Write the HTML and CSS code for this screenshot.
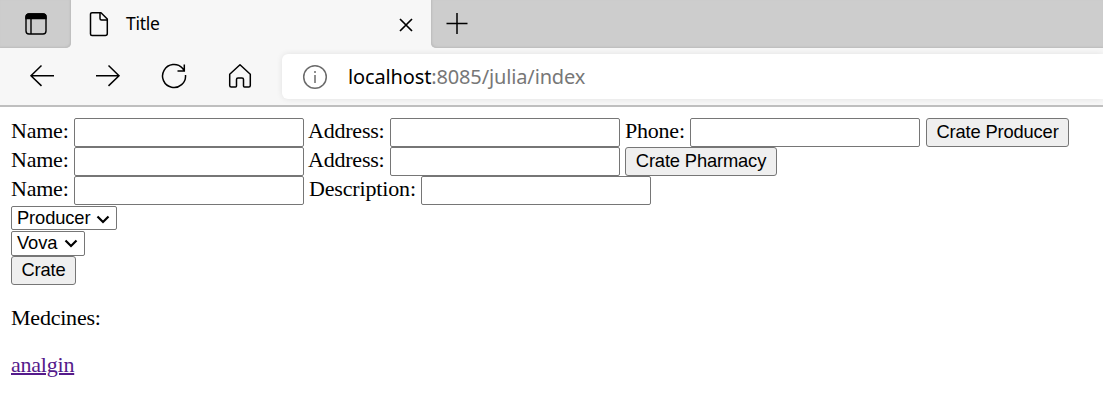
FILE: index.html
```html
<!DOCTYPE html>
<html lang="en">
<head>
<meta charset="utf-8">
<title>Title</title>
<link rel="stylesheet" href="styles.css">
</head>
<body>
<header class="browser">
  <div class="tabstrip">
    <div class="strip-left">
      <svg class="icon-workspace" width="22" height="22" viewBox="0 0 22 22" fill="none" stroke="#000" stroke-width="1.4"><rect x="1" y="1" width="20" height="20" rx="3"/><path d="M1 5.500V4a3 3 0 0 1 3-3h14a3 3 0 0 1 3 3v1.500z" fill="#000"/><path d="M6 5v16"/></svg>
    </div>
    <div class="tab">
      <svg class="icon-page" width="20" height="26" viewBox="0 0 20 26" fill="none" stroke="#000" stroke-width="1.500" stroke-linejoin="round"><path d="M3 1.700h9l6.300 6.300v14.500a2 2 0 0 1-2 2H3a1.500 1.500 0 0 1-1.500-1.500V3.200A1.500 1.500 0 0 1 3 1.700z"/><path d="M11 2v5.500a1.500 1.500 0 0 0 1.500 1.500h5.500"/></svg>
      <span class="tab-title">Title</span>
      <svg class="icon-close" width="14" height="14" viewBox="0 0 14 14" stroke="#000" stroke-width="1.700"><path d="M1 1l12 12M13 1L1 13"/></svg>
    </div>
    <div class="strip-right">
      <svg width="22" height="22" viewBox="0 0 22 22" stroke="#000" stroke-width="1.500"><path d="M.5 10.500h21M11 0v21"/></svg>
    </div>
  </div>
  <div class="toolbar">
    <nav class="nav">
      <svg width="26" height="26" viewBox="0 0 26 26"><path d="M25 12.700H2M12.500 2.500L2 12.700l10.500 10.200"/></svg>
      <svg width="26" height="26" viewBox="0 0 26 26"><path d="M1 12.700h23M13.500 2.500L24 12.700 13.500 22.900"/></svg>
      <svg width="26" height="26" viewBox="0 0 26 26"><path d="M24.500 12A11.500 11.500 0 1 1 21.500 5.200L23 7.300M23.300 1.500V8H16.500"/></svg>
      <svg width="26" height="26" viewBox="0 0 26 26" stroke-linejoin="round"><path d="M2.700 11.200L13 1.800l10.300 9.400V22.500a1.500 1.500 0 0 1-1.500 1.500h-4.300a1 1 0 0 1-1-1v-6.500a1.500 1.500 0 0 0-1.500-1.500h-4a1.500 1.500 0 0 0-1.500 1.500V23a1 1 0 0 1-1 1H4.200a1.500 1.500 0 0 1-1.500-1.500z"/></svg>
    </nav>
    <div class="address">
      <svg width="26" height="26" viewBox="0 0 26 26" fill="none" stroke="#6b6b6b" stroke-width="1.500"><circle cx="13" cy="13" r="11.300"/><path d="M13 11v8M13 7v2"/></svg>
      <span class="url"><span class="host">localhost</span>:8085/julia/index</span>
    </div>
  </div>
</header>
<main class="content">
  <form class="row">
    <label class="name">Name:</label><input type="text">
    <label class="addr">Address:</label><input type="text">
    <label class="phone">Phone:</label><input type="text">
    <button type="button" class="btn producer">Crate Producer</button>
  </form>
  <form class="row">
    <label class="name">Name:</label><input type="text">
    <label class="addr">Address:</label><input type="text">
    <button type="button" class="btn pharmacy">Crate Pharmacy</button>
  </form>
  <form>
    <div class="row">
      <label class="name">Name:</label><input type="text">
      <label class="desc">Description:</label><input type="text">
    </div>
    <div class="select select-producer"><span>Producer</span><svg width="14" height="9" viewBox="0 0 14 9"><path d="M1.500 1.500L7 7l5.500-5.500"/></svg></div>
    <div class="select select-vova"><span>Vova</span><svg width="14" height="9" viewBox="0 0 14 9"><path d="M1.500 1.500L7 7l5.500-5.500"/></svg></div>
    <button type="button" class="btn crate">Crate</button>
  </form>
  <p class="heading">Medcines:</p>
  <a class="link" href="#">analgin</a>
</main>
</body>
</html>
```
FILE: styles.css
```css
* { box-sizing: border-box; }
body { margin: 0; width: 1103px; height: 406px; overflow: hidden; background: #fff; color: #000; }
svg { display: block; flex: none; }

.browser { height: 107px; background: #f7f7f7; border-bottom: 2px solid #bfbfbf; }
.tabstrip { display: flex; height: 48px; }
.strip-left { width: 71px; background: #cdcdcd; border-radius: 0 0 5px 0; padding: 13px 0 0 25px; box-shadow: inset -1px -1px 2px #bcbcbc; }
.tab { width: 360px; display: flex; padding-left: 18px; background: #f7f7f7; border-radius: 7px 7px 0 0; }
.icon-page { margin-top: 11px; }
.tab-title { width: 272px; margin-left: 17px; font: 17.5px/47px "Noto Sans", sans-serif; letter-spacing: -.25px; }
.icon-close { margin: 18px 0 0 1px; }
.strip-right { flex: 1; background: #cdcdcd; border-radius: 0 0 0 5px; padding: 13px 0 0 15px; box-shadow: inset 1px -1px 2px #bcbcbc; }

.toolbar { display: flex; height: 57px; padding-top: 6px; overflow: hidden; }
.nav { width: 282px; display: flex; gap: 40px; padding: 9px 0 0 29px; fill: none; stroke: #000; stroke-width: 1.5; }
.address { flex: 1; height: 45px; display: flex; align-items: center; padding-left: 20px; background: #fff; border-radius: 6px 0 0 6px; box-shadow: 0 0 6px rgba(0, 0, 0, .09); }
.url { margin-left: 20px; font: 20px/45px "Noto Sans", sans-serif; letter-spacing: -.14px; color: #777; white-space: nowrap; }
.host { color: #000; }

.content { padding: 11px 0 0 11px; font: 22px/25px "Liberation Serif", serif; letter-spacing: -.22px; }
.row { display: flex; height: 29px; }
label { flex: none; white-space: nowrap; }
.name { width: 63px; }
.addr { width: 86px; padding-left: 4px; }
.phone { width: 70px; padding-left: 5px; }
.desc { width: 117px; padding-left: 5px; letter-spacing: -.16px; }
input { flex: none; width: 230px; height: 29px; margin: 0; padding: 1px 3px; border: 1px solid #767676; border-radius: 2px; background: #fff; }
.btn { display: block; flex: none; height: 29px; margin: 0; padding: 0 0 1px; border: 1px solid #767676; border-radius: 3px; background: #efefef; color: #000; font: 18.33px/26px "Liberation Sans", sans-serif; letter-spacing: -.15px; white-space: nowrap; }
.producer { width: 143px; margin-left: 6px; }
.pharmacy { width: 152px; margin-left: 5px; }
.crate { width: 65px; }
.select { display: flex; align-items: center; justify-content: space-between; height: 24px; margin-top: 1px; padding: 0 6px 0 5px; border: 1px solid #767676; border-radius: 2px; font: 18.33px/22px "Liberation Sans", sans-serif; letter-spacing: -.12px; }
.select svg { fill: none; stroke: #000; stroke-width: 2.2; margin-top: 2px; }
.select-producer { width: 106px; }
.select-vova { width: 74px; height: 25px; line-height: 21px; padding-bottom: 2px; }
.heading { margin: 20px 0 22px; }
.link { color: #551a8b; text-decoration: underline; text-decoration-thickness: 2px; }
```
